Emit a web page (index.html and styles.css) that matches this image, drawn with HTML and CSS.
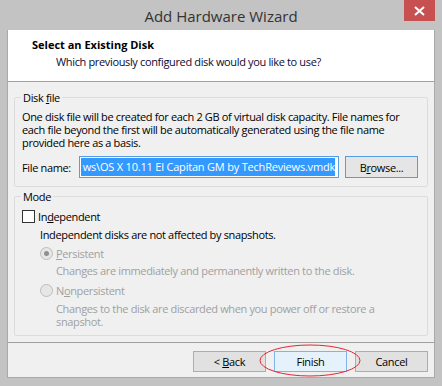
FILE: index.html
```html
<!DOCTYPE html>
<html lang="en">

<head>
    <meta charset="UTF-8">
    <link rel="stylesheet" href="styles.css">
    <title>Add Hardware Wizard</title>
</head>

<body>

    <div class="window">
        <div class="titlebar">
            <span class="title">Add Hardware Wizard</span>
            <div class="close-btn">
                <svg width="11" height="10" viewBox="0 0 11 10">
                    <path d="M1 1 L10 9 M10 1 L1 9" stroke="#fff" stroke-width="2" />
                </svg>
            </div>
        </div>

        <div class="client">
            <div class="header">
                <div class="header-title">Select an Existing Disk</div>
                <div class="header-sub">Which previously configured disk would you like to use?</div>
            </div>

            <div class="content">
                <fieldset class="group">
                    <legend>Disk <u>f</u>ile</legend>
                    <p class="desc">One disk file will be created for each 2 GB of virtual disk capacity. File names for
                        each file beyond the first will be automatically generated using the file name provided here as a basis.</p>
                    <div class="file-row">
                        <span class="file-label">File name:</span>
                        <div class="file-input">
                            <span class="selected">ws\OS X 10.11 El Capitan GM by TechReviews.vmdk</span>
                        </div>
                        <div class="btn btn-browse"><span>B<u>r</u>owse...</span></div>
                    </div>
                </fieldset>

                <fieldset class="group group-mode">
                    <legend>Mode</legend>
                    <div class="check-row">
                        <span class="checkbox"></span>
                        <span>In<u>d</u>ependent</span>
                    </div>
                    <div class="note">Independent disks are not affected by snapshots.</div>
                    <div class="radio-row">
                        <span class="radio checked"></span>
                        <span><u>P</u>ersistent</span>
                    </div>
                    <div class="radio-note">Changes are immediately and permanently written to the disk.</div>
                    <div class="radio-row second">
                        <span class="radio"></span>
                        <span>N<u>o</u>npersistent</span>
                    </div>
                    <div class="radio-note last">Changes to the disk are discarded when you power off or restore a
                        snapshot.</div>
                </fieldset>
            </div>

            <div class="footer">
                <div class="btn"><span>&lt; <u>B</u>ack</span></div>
                <div class="btn btn-default"><span>Finish</span></div>
                <div class="btn"><span>Cancel</span></div>
                <svg class="circle-mark" width="102" height="33" viewBox="0 0 102 33">
                    <ellipse cx="51" cy="16.5" rx="50" ry="15.5" fill="none" stroke="#e42530" stroke-width="1" />
                </svg>
            </div>
        </div>
    </div>

</body>

</html>
```

FILE: styles.css
```css
body {
    margin: 0;
    font-family: 'Open Sans', sans-serif;
    font-size: 11px;
    letter-spacing: -0.35px;
    color: #000;
}

.window {
    width: 442px;
    height: 386px;
    background-color: #c3c3c3;
    box-sizing: border-box;
    padding: 0 7px 8px 7px;
    display: flex;
    flex-direction: column;
}

.titlebar {
    height: 30px;
    display: flex;
    justify-content: center;
    align-items: center;
    position: relative;
}

.title {
    font-size: 15px;
    letter-spacing: 0;
    color: #333;
    margin-top: 1px;
}

.close-btn {
    position: absolute;
    top: 0;
    right: 0;
    width: 31px;
    height: 21px;
    background-color: #c75050;
    display: flex;
    justify-content: center;
    align-items: center;
}

.client {
    flex: 1;
    border: 1px solid #a9a9a9;
    border-top: none;
    background-color: #f0f0f0;
    display: flex;
    flex-direction: column;
}

.header {
    height: 52px;
    background-color: #fff;
    border-bottom: 1px solid #a0a0a0;
    box-sizing: border-box;
    padding-top: 8px;
}

.header-title {
    font-weight: bold;
    letter-spacing: 0;
    line-height: 14px;
    padding-left: 24px;
}

.header-sub {
    line-height: 14px;
    margin-top: 3px;
    padding-left: 48px;
    color: #0a0a32;
}

.content {
    padding: 9px 6px 0 6px;
}

.group {
    margin: 0;
    border: 1px solid #dcdcdc;
    border-radius: 2px;
    padding: 6px 6px 8px 7px;
}

.group legend {
    padding: 0 2px;
    margin-left: -1px;
    line-height: 13px;
}

.desc {
    margin: 0;
    line-height: 13px;
}

.file-row {
    display: flex;
    align-items: center;
    margin-top: 7px;
}

.file-label {
    width: 57px;
}

.file-input {
    width: 254px;
    height: 20px;
    border: 1px solid #569de5;
    background-color: #fff;
    display: flex;
    justify-content: flex-end;
    align-items: center;
    overflow: hidden;
    padding: 0 3px 0 1px;
}

.selected {
    white-space: nowrap;
    background-color: #3399ff;
    color: #fff;
    letter-spacing: -0.2px;
    line-height: 18px;
    padding-left: 2px;
}

.btn {
    width: 71px;
    height: 19px;
    border: 1px solid #adadad;
    background-color: #e1e1e1;
    display: flex;
    justify-content: center;
    align-items: center;
}

.btn-browse {
    margin-left: 6px;
    height: 20px;
    border-color: #569de5;
    background-color: #e5e5e5;
}

.group-mode {
    margin-top: 3px;
    padding-top: 7px;
    padding-bottom: 7px;
}

.check-row,
.radio-row {
    display: flex;
    align-items: center;
    line-height: 13px;
}

.checkbox {
    width: 11px;
    height: 11px;
    border: 1px solid #333;
    background-color: #fff;
    margin-right: 3px;
}

.note {
    line-height: 13px;
    margin-top: 5px;
    padding-left: 18px;
}

.radio-row {
    margin-top: 6px;
    padding-left: 18px;
    color: #a0a0a0;
}

.radio-row.second {
    margin-top: 7px;
}

.radio {
    width: 11px;
    height: 11px;
    border: 1px solid #bcbcbc;
    border-radius: 50%;
    background-color: #e6e6e6;
    margin-right: 3px;
    position: relative;
}

.radio.checked::after {
    content: '';
    position: absolute;
    left: 3px;
    top: 3px;
    width: 5px;
    height: 5px;
    border-radius: 50%;
    background-color: #8f8f8f;
}

.radio-note {
    line-height: 13px;
    margin-top: 4px;
    padding-left: 34px;
    color: #a0a0a0;
}

.radio-note.last {
    margin-top: 5px;
}

.footer {
    margin-top: auto;
    border-top: 1px solid #a0a0a0;
    padding: 8px 6px 5px 0;
    display: flex;
    justify-content: flex-end;
    gap: 8px;
    position: relative;
}

.btn-default {
    border-color: #7eb4ea;
    background-color: #e5f1fb;
}

.circle-mark {
    position: absolute;
    left: 251px;
    top: 1px;
}
```
